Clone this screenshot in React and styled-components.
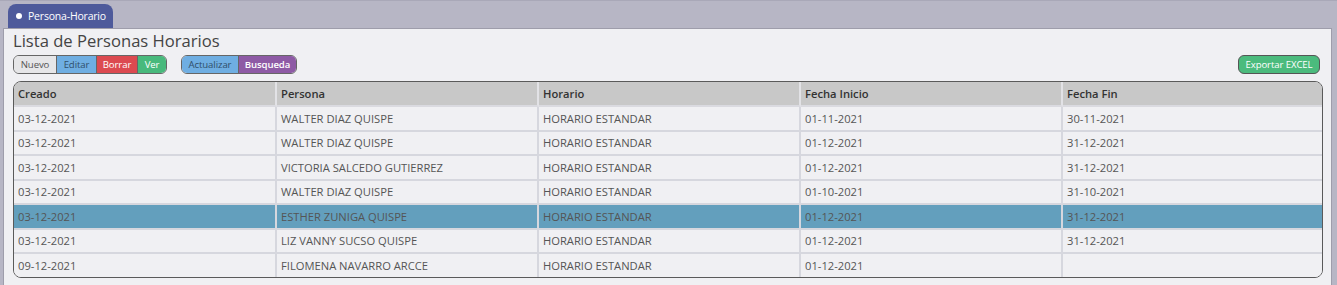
import React from 'react';
import styled, { createGlobalStyle } from 'styled-components';

const GlobalStyle = createGlobalStyle`
  html, body {
    margin: 0;
    padding: 0;
    background: #b7b6c5;
  }
  body {
    font-family: "Open Sans", "Noto Sans", sans-serif;
  }
`;

const Page = styled.div`
  width: 1337px;
  height: 285px;
  box-sizing: border-box;
  padding: 3px 5px 0 3px;
  border-top: 1px solid #a9a8b8;
  overflow: hidden;
`;

const TabBar = styled.div`
  display: flex;
  padding-left: 5px;
`;

const Tab = styled.div`
  display: flex;
  align-items: center;
  gap: 6px;
  height: 24px;
  padding: 0 8px 0 8px;
  width: 105px;
  box-sizing: border-box;
  background: #4e5a9b;
  color: #fff;
  font-size: 10.5px;
  white-space: nowrap;
  letter-spacing: -0.2px;
  border-radius: 8px 8px 0 0;
`;

const Dot = styled.span`
  flex: none;
  width: 6px;
  height: 6px;
  border-radius: 50%;
  background: #fff;
`;

const Panel = styled.div`
  background: #f0f0f3;
  border: 1px solid #9e9dab;
  border-bottom: none;
  padding: 0 8px 0 9px;
  height: 260px;
`;

const Title = styled.h1`
  margin: 0;
  padding-top: 1px;
  font-size: 16.6px;
  font-weight: 400;
  line-height: 22px;
  color: #444;
`;

const Toolbar = styled.div`
  display: flex;
  align-items: center;
  gap: 14px;
  margin-top: 3px;
  height: 19px;
`;

const Group = styled.div`
  display: flex;
  border: 1px solid #666;
  border-radius: 6px;
  overflow: hidden;
  height: 17px;
`;

const colors = {
  light: ['#e6e6e8', '#555'],
  blue: ['#6faee2', '#2f4f6a'],
  red: ['#dc4a50', '#fff'],
  green: ['#48b97c', '#fff'],
  purple: ['#8e5aa5', '#fff'],
};

const Btn = styled.button`
  border: none;
  margin: 0;
  padding: 0;
  width: ${p => p.$w}px;
  text-align: center;
  font-family: inherit;
  font-size: 9.6px;
  letter-spacing: -0.1px;
  font-weight: ${p => (p.$bold ? 600 : 400)};
  background: ${p => colors[p.$kind][0]};
  color: ${p => colors[p.$kind][1]};
  line-height: 17px;
  white-space: nowrap;
  border-left: ${p => (p.$first ? 'none' : '1px solid #666')};
`;

const Spacer = styled.div`
  flex: 1;
`;

const ExportBtn = styled.button`
  border: 1px solid #555;
  border-radius: 6px;
  background: #4bbb7d;
  color: #fff;
  font-family: inherit;
  font-size: 9.6px;
  letter-spacing: -0.1px;
  height: 19px;
  width: 82px;
  padding: 0;
  margin-right: 3px;
`;

const TableWrap = styled.div`
  margin-top: 7px;
  border: 1px solid #5a5a5a;
  border-radius: 8px;
  overflow: hidden;
  width: 1310px;
  box-sizing: border-box;
`;

const Table = styled.table`
  width: 100%;
  border-collapse: separate;
  border-spacing: 0;
  table-layout: fixed;
  font-size: 11.2px;
`;

const Th = styled.th`
  background: #c8c8c8;
  color: #333;
  font-weight: 600;
  text-align: left;
  height: 23px;
  padding: 0 4px;
  border-bottom: 2px solid #dadae0;
  border-right: 2px solid #e2e2e6;
  &:last-child { border-right: none; }
`;

const Row = styled.tr`
  background: ${p => (p.$selected ? '#639fbd' : '#f0f0f3')};
  &:last-child td { border-bottom: none; }
`;

const Td = styled.td`
  color: #555;
  height: 22.5px;
  padding: 0 4px;
  border-bottom: 2px solid #d6d7de;
  border-right: 2px solid #d6d7de;
  white-space: nowrap;
  overflow: hidden;
  &:last-child { border-right: none; }
`;

const columns = [
  { label: 'Creado', width: 263 },
  { label: 'Persona', width: 262 },
  { label: 'Horario', width: 262 },
  { label: 'Fecha Inicio', width: 262 },
  { label: 'Fecha Fin' },
];

const rows = [
  ['03-12-2021', 'WALTER DIAZ QUISPE', 'HORARIO ESTANDAR', '01-11-2021', '30-11-2021'],
  ['03-12-2021', 'WALTER DIAZ QUISPE', 'HORARIO ESTANDAR', '01-12-2021', '31-12-2021'],
  ['03-12-2021', 'VICTORIA SALCEDO GUTIERREZ', 'HORARIO ESTANDAR', '01-12-2021', '31-12-2021'],
  ['03-12-2021', 'WALTER DIAZ QUISPE', 'HORARIO ESTANDAR', '01-10-2021', '31-10-2021'],
  ['03-12-2021', 'ESTHER ZUNIGA QUISPE', 'HORARIO ESTANDAR', '01-12-2021', '31-12-2021'],
  ['03-12-2021', 'LIZ VANNY SUCSO QUISPE', 'HORARIO ESTANDAR', '01-12-2021', '31-12-2021'],
  ['09-12-2021', 'FILOMENA NAVARRO ARCCE', 'HORARIO ESTANDAR', '01-12-2021', ''],
];

const App = () => {
  return (
    <Page>
      <GlobalStyle />
      <TabBar>
        <Tab><Dot />Persona-Horario</Tab>
      </TabBar>
      <Panel>
        <Title>Lista de Personas Horarios</Title>
        <Toolbar>
          <Group>
            <Btn $kind="light" $first $w={42}>Nuevo</Btn>
            <Btn $kind="blue" $w={40}>Editar</Btn>
            <Btn $kind="red" $w={41}>Borrar</Btn>
            <Btn $kind="green" $w={29}>Ver</Btn>
          </Group>
          <Group>
            <Btn $kind="blue" $first $w={56}>Actualizar</Btn>
            <Btn $kind="purple" $bold $w={58}>Busqueda</Btn>
          </Group>
          <Spacer />
          <ExportBtn>Exportar EXCEL</ExportBtn>
        </Toolbar>
        <TableWrap>
          <Table>
            <colgroup>
              {columns.map(c => <col key={c.label} style={c.width ? { width: c.width } : undefined} />)}
            </colgroup>
            <thead>
              <tr>
                {columns.map(c => <Th key={c.label}>{c.label}</Th>)}
              </tr>
            </thead>
            <tbody>
              {rows.map((r, i) => (
                <Row key={i} $selected={i === 4}>
                  {r.map((c, j) => <Td key={j}>{c}</Td>)}
                </Row>
              ))}
            </tbody>
          </Table>
        </TableWrap>
      </Panel>
    </Page>
  );
};

export default App;
